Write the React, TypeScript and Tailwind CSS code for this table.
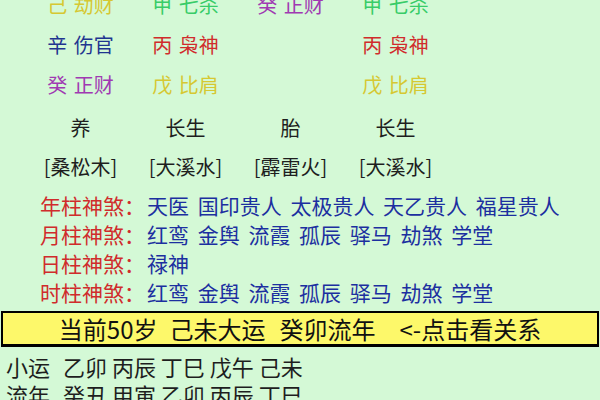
const FONT = "font-['Noto_Sans_CJK_SC','Noto_Sans',sans-serif]";

const YELLOW = "text-[#d6c832]";
const GREEN = "text-[#38cc68]";
const PURPLE = "text-[#a03ab2]";
const NAVY = "text-[#1f3590]";
const RED = "text-[#d02c2c]";
const INK = "text-[#1e1e1e]";

// 十神 grid: 4 columns, 3 rows of stems + 长生 + 纳音
const GRID: { text: string; color: string }[][] = [
  [
    { text: "己 劫财", color: YELLOW },
    { text: "甲 七杀", color: GREEN },
    { text: "癸 正财", color: PURPLE },
    { text: "甲 七杀", color: GREEN },
  ],
  [
    { text: "辛 伤官", color: NAVY },
    { text: "丙 枭神", color: RED },
    { text: "", color: INK },
    { text: "丙 枭神", color: RED },
  ],
  [
    { text: "癸 正财", color: PURPLE },
    { text: "戊 比肩", color: YELLOW },
    { text: "", color: INK },
    { text: "戊 比肩", color: YELLOW },
  ],
  [
    { text: "养", color: INK },
    { text: "长生", color: INK },
    { text: "胎", color: INK },
    { text: "长生", color: INK },
  ],
  [
    { text: "[桑松木]", color: INK },
    { text: "[大溪水]", color: INK },
    { text: "[霹雷火]", color: INK },
    { text: "[大溪水]", color: INK },
  ],
];

const SHENSHA = [
  { label: "年柱神煞：", value: "天医 国印贵人 太极贵人 天乙贵人 福星贵人" },
  { label: "月柱神煞：", value: "红鸾 金舆 流霞 孤辰 驿马 劫煞 学堂" },
  { label: "日柱神煞：", value: "禄神" },
  { label: "时柱神煞：", value: "红鸾 金舆 流霞 孤辰 驿马 劫煞 学堂" },
];

const YUN = [
  { label: "小运", value: "乙卯 丙辰 丁巳 戊午 己未" },
  { label: "流年", value: "癸丑 甲寅 乙卯 丙辰 丁巳" },
];

export default function App() {
  return (
    <div className={`${FONT} h-[400px] w-[600px] overflow-hidden bg-[#d4f9d6]`}>
      {/* pillars grid */}
      <div className="-mt-[15px] pl-[28px]">
        {GRID.map((row, r) => (
          <div
            className={`grid w-[420px] grid-cols-4 items-center ${r === 3 ? "h-[42px] pt-[4px]" : "h-[40px]"}`}
            key={`row-${r}`}
          >
            {row.map((cell, c) => (
              <span
                className={`text-center text-[20px] leading-none whitespace-pre [word-spacing:2px] ${cell.color}`}
                key={`cell-${r}-${c}`}
              >
                {cell.text}
              </span>
            ))}
          </div>
        ))}
      </div>

      {/* 神煞 */}
      <div className="mt-[4px] pl-[40px]">
        {SHENSHA.map((s) => (
          <div className="flex h-[29px] items-center text-[21px] leading-none" key={s.label}>
            <span className={RED}>{s.label}</span>
            <span className="ml-[2px] text-[#1c2fa0] [word-spacing:4px]">{s.value}</span>
          </div>
        ))}
      </div>

      {/* 大运 bar */}
      <div className="mx-[1px] mt-[4px] flex h-[36px] items-center justify-center border-2 border-b-[3px] border-black bg-[#fdf86a] text-[24px] leading-none text-[#111]">
        <span>当前50岁</span>
        <span className="ml-[12px]">己未大运</span>
        <span className="ml-[14px]">癸卯流年</span>
        <span className="ml-[24px]">&lt;-点击看关系</span>
      </div>

      {/* 小运 / 流年 */}
      <div className="mt-[5px] pl-[6px]">
        {YUN.map((y) => (
          <div className="flex h-[28px] items-center text-[22px] leading-none text-[#1e1e1e]" key={y.label}>
            <span>{y.label}</span>
            <span className="ml-[13px]">{y.value}</span>
          </div>
        ))}
      </div>
    </div>
  );
}
